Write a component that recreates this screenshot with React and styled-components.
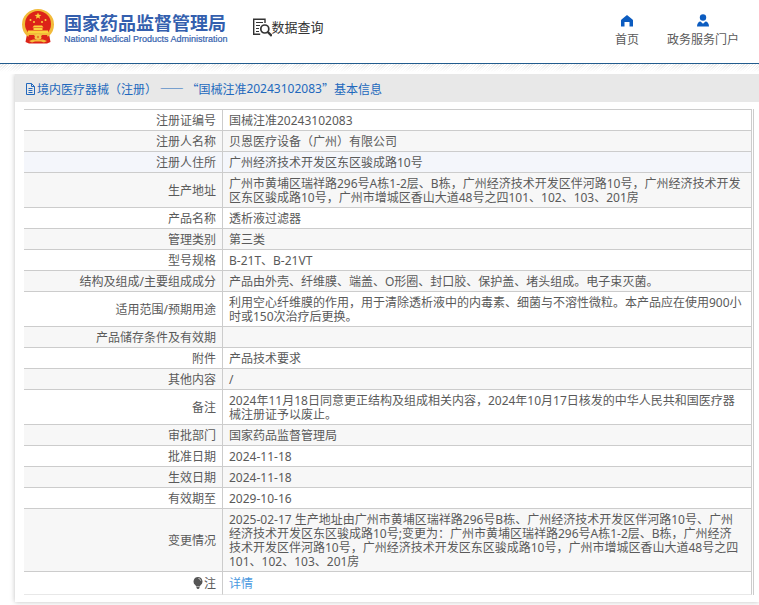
import React from 'react';
import styled, { createGlobalStyle } from 'styled-components';

const GlobalStyles = createGlobalStyle`
  html {
    --blue: #2268bd;
    --navy: #345fae;
    --text: #5a5a5a;
    --line: #ccc;
    --cjk: 'Noto Sans CJK SC', sans-serif;
    --mixed: 'Noto Sans', 'Noto Sans CJK SC', sans-serif;
    box-sizing: border-box;
  }
  *, *:before, *:after {
    box-sizing: inherit;
  }
  body {
    margin: 0;
    background: white;
    color: var(--text);
    font-family: var(--mixed);
    font-size: 12px;
    line-height: 14px;
    overflow-x: hidden;
  }
  a {
    color: inherit;
    text-decoration: none;
  }
`;

const HeaderStyles = styled.header`
  align-items: flex-start;
  border-bottom: 1px solid #225c8e;
  display: flex;
  height: 64px;
  padding: 8px 20px 0 21px;
`;

const Brand = styled.a`
  color: var(--navy);
  display: flex;
  gap: 9px;
  svg {
    display: block;
    height: 36px;
    width: 34px;
  }
`;

const BrandText = styled.span`
  display: grid;
  grid-template-rows: 25px 12px;
  strong {
    font-family: var(--cjk);
    font-size: 18px;
    line-height: 28px;
  }
  small {
    font-family: 'Liberation Sans', sans-serif;
    font-size: 9px;
    line-height: 12px;
    -webkit-text-stroke: 0.2px;
  }
`;

const Section = styled.a`
  align-items: center;
  color: #333;
  display: flex;
  font-family: var(--cjk);
  font-size: 13px;
  line-height: 20px;
  margin-left: 24px;
  padding-top: 9px;
  svg {
    height: 20px;
    width: 20px;
  }
`;

const Nav = styled.nav`
  display: flex;
  gap: 28px;
  margin-left: auto;
  padding-top: 6px;
  a {
    align-items: center;
    display: flex;
    flex-direction: column;
    gap: 5px;
    line-height: 16px;
  }
  svg {
    fill: #0c5cc0;
    height: 13px;
    width: 14px;
  }
`;

const Hatch = styled.div`
  background:
    linear-gradient(rgba(255, 255, 255, 0.2), white),
    repeating-linear-gradient(135deg, #e2e2e2 0 1px, white 1px 2px);
  height: 8px;
`;

const Card = styled.main`
  background: white;
  box-shadow: 0 0 5px rgba(0, 0, 0, 0.25);
  clip-path: inset(0 0 -8px -8px);
  margin: 2px 0 8px 15px;
  padding-bottom: 7px;
`;

const Title = styled.h1`
  align-items: center;
  background: #e8e8e8;
  color: var(--blue);
  display: flex;
  font-family: var(--cjk);
  font-size: 12px;
  font-weight: 400;
  height: 28px;
  line-height: 16px;
  margin: 0 0 7px;
  padding: 1px 10px 0;
  white-space: pre;
  svg {
    height: 12px;
    margin-right: 1px;
    width: 11px;
  }
  span {
    font-family: var(--mixed);
  }
`;

const Frame = styled.div`
  border-right: 1px solid var(--line);
  margin: 0 5px 0 9px;
  padding-right: 1px;
`;

const Table = styled.table`
  border-collapse: separate;
  border-spacing: 0;
  width: 100%;
  th,
  td {
    border-top: 1px solid var(--line);
    padding: 4px 6px 2px;
    vertical-align: middle;
  }
  th {
    font-weight: 400;
    text-align: right;
    width: 198px;
  }
  td {
    border-left: 1px solid var(--line);
    border-right: 1px solid var(--line);
    height: 21px;
    padding-right: 8px;
  }
`;

const Row = styled.tr`
  background: ${({ $active }) => ($active ? '#f4f6fb' : 'white')};
  &:nth-child(even) {
    background: #f7f7f7;
  }
`;

const NoteRow = styled(Row)`
  line-height: 16px;
  th,
  td {
    border-bottom: 1px solid #e8e8e8;
  }
  a {
    color: #4a98e0;
  }
  svg {
    height: 12px;
    margin-right: 1px;
    vertical-align: -1px;
    width: 10px;
  }
`;

const rows = [
  ['注册证编号', '国械注准20243102083'],
  ['注册人名称', '贝恩医疗设备（广州）有限公司'],
  ['注册人住所', '广州经济技术开发区东区骏成路10号', true],
  [
    '生产地址',
    '广州市黄埔区瑞祥路296号A栋1-2层、B栋，广州经济技术开发区伴河路10号，广州经济技术开发区东区骏成路10号，广州市增城区香山大道48号之四101、102、103、201房',
  ],
  ['产品名称', '透析液过滤器'],
  ['管理类别', '第三类'],
  ['型号规格', 'B-21T、B-21VT'],
  [
    '结构及组成/主要组成成分',
    '产品由外壳、纤维膜、端盖、O形圈、封口胶、保护盖、堵头组成。电子束灭菌。',
  ],
  [
    '适用范围/预期用途',
    '利用空心纤维膜的作用，用于清除透析液中的内毒素、细菌与不溶性微粒。本产品应在使用900小时或150次治疗后更换。',
  ],
  ['产品储存条件及有效期', ''],
  ['附件', '产品技术要求'],
  ['其他内容', '/'],
  [
    '备注',
    '2024年11月18日同意更正结构及组成相关内容，2024年10月17日核发的中华人民共和国医疗器械注册证予以废止。',
  ],
  ['审批部门', '国家药品监督管理局'],
  ['批准日期', '2024-11-18'],
  ['生效日期', '2024-11-18'],
  ['有效期至', '2029-10-16'],
  [
    '变更情况',
    '2025-02-17 生产地址由广州市黄埔区瑞祥路296号B栋、广州经济技术开发区伴河路10号、广州经济技术开发区东区骏成路10号;变更为：广州市黄埔区瑞祥路296号A栋1-2层、B栋，广州经济技术开发区伴河路10号，广州经济技术开发区东区骏成路10号，广州市增城区香山大道48号之四101、102、103、201房',
  ],
];

function Emblem() {
  return (
    <svg viewBox="0 0 34 36" aria-hidden="true">
      <path d="M6 26h22l1.500 8-3.500 1.500H8L4.500 34z" fill="#dc2318" />
      <path
        d="M17 1a16 15.500 0 0 1 16 15.500c0 5-2 9-5 11.500-3 1.500-6 2-8 2h-6c-2 0-5-.5-8-2-3-2.500-5-6.500-5-11.500A16 15.500 0 0 1 17 1z"
        fill="#f2bb3a"
      />
      <circle cx="17" cy="16" r="13" fill="#dc2318" />
      <path
        d="M17 4.500l.9 2.300 2.500.1-2 1.500.7 2.400-2.100-1.300-2.100 1.300.7-2.400-2-1.500 2.500-.1z"
        fill="#fbd33c"
      />
      <g fill="#fbd33c">
        <circle cx="9.500" cy="12" r="1" />
        <circle cx="13" cy="14" r="1" />
        <circle cx="21" cy="14" r="1" />
        <circle cx="24.500" cy="12" r="1" />
        <path d="M13 17.500h8l1.500 2h-11zM12.500 20h9v2h-9zM7 22.500h20v3H7z" />
      </g>
      <path d="M5 25h24l-3 3.500h-5l-1 2.500h-6l-1-2.500H8z" fill="#f2bb3a" />
      <path d="M8 27h5l1 2-2 2-5-1zM26 27h-5l-1 2 2 2 5-1z" fill="#dc2318" />
      <circle cx="17" cy="29" r="3" fill="#f6c84a" />
      <circle cx="17" cy="29" r="1.200" fill="#e8842a" />
      <path d="M8 33l4-1.500h10l4 1.500-3 1.500-3-1h-6l-3 1z" fill="#f2bb3a" />
    </svg>
  );
}

function SearchDoc() {
  return (
    <svg viewBox="0 0 20 20" fill="none" stroke="#333" aria-hidden="true">
      <path d="M13 6V2.200H1.700v15h6.500" strokeWidth="1.400" />
      <path d="M4 5.500h7M4 8.500h4M4 11.500h3M4 14.500h3" />
      <circle cx="12.800" cy="12" r="4" strokeWidth="1.700" />
      <path d="M15.800 15l4 4" strokeWidth="2.400" />
    </svg>
  );
}

function Header() {
  return (
    <HeaderStyles>
      <Brand href="#">
        <Emblem />
        <BrandText>
          <strong>国家药品监督管理局</strong>
          <small>National Medical Products Administration</small>
        </BrandText>
      </Brand>
      <Section href="#">
        <SearchDoc />
        数据查询
      </Section>
      <Nav>
        <a href="#">
          <svg viewBox="0 0 14 13" aria-hidden="true">
            <path d="M7 1l5.500 4.500q.5.500.5 1V12.500H9.500V8h-5v4.500H1V6.500q0-.5.500-1z" />
          </svg>
          首页
        </a>
        <a href="#">
          <svg viewBox="0 0 14 13" aria-hidden="true">
            <circle cx="7" cy="3.500" r="3.200" />
            <path d="M1 12.500c0-3 1.500-5 3.500-5L7 9.800l2.500-2.300c2 0 3.500 2 3.500 5z" />
          </svg>
          政务服务门户
        </a>
      </Nav>
    </HeaderStyles>
  );
}

export default function App() {
  return (
    <div lang="zh-CN">
      <GlobalStyles />
      <Header />
      <Hatch />
      <Card>
        <Title>
          <svg viewBox="0 0 11 12" fill="none" stroke="#2268bd" aria-hidden="true">
            <path d="M1.500.5h5l3 3v8h-8zM6.500.5v3h3M3.500 5.500h4M3.500 7.500h4M3.500 9.500h4" />
          </svg>
          境内医疗器械（注册） —— “国械注准<span>20243102083</span>”基本信息
        </Title>
        <Frame>
          <Table>
            <tbody>
              {rows.map(([label, value, active]) => (
                <Row key={label} $active={active}>
                  <th scope="row">{label}</th>
                  <td>{value}</td>
                </Row>
              ))}
              <NoteRow>
                <th scope="row">
                  <svg viewBox="0 0 10 12" fill="#555" aria-hidden="true">
                    <path d="M5 0a4.500 4.500 0 0 1 2.500 8.200L6.800 9.500H3.200L2.500 8.200A4.500 4.500 0 0 1 5 0z" />
                    <path d="M3.500 10h3v1l-1 1h-1l-1-1z" />
                    <path d="M5.500 1.500c1.300.2 2 1 2.200 2.200" fill="none" stroke="#ddd" />
                  </svg>
                  注
                </th>
                <td>
                  <a href="#">详情</a>
                </td>
              </NoteRow>
            </tbody>
          </Table>
        </Frame>
      </Card>
    </div>
  );
}
